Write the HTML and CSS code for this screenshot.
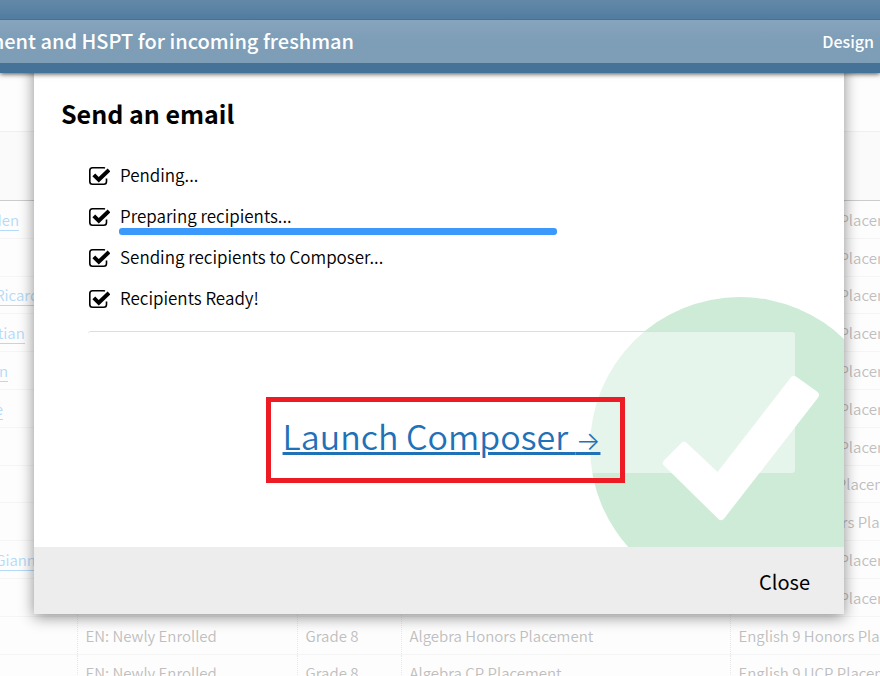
FILE: index.html
```html
<!DOCTYPE html>
<html lang="en">
<head>
  <meta charset="UTF-8" />
  <meta name="viewport" content="width=device-width, initial-scale=1.0"/>
  <title>Send an email</title>
  <link rel="stylesheet" href="styles.css">
</head>
<body>

  <header class="top">
    <div class="top-bar">
      <h1 class="top-title">Placement and HSPT for incoming freshman</h1>
      <a class="top-link" href="#">Design</a>
    </div>
  </header>

  <main class="page">
    <table class="students">
      <thead>
        <tr><th class="c-name"></th><th class="c-status"></th><th class="c-grade"></th><th class="c-math"></th><th></th></tr>
      </thead>
      <tbody>
        <tr><td><a href="#">Martinez, Aiden</a></td><td></td><td></td><td></td><td>English 9 Core Placement</td></tr>
        <tr><td></td><td></td><td></td><td></td><td>English 9 Core Placement</td></tr>
        <tr><td><a href="#">Hernandez, Ricardo</a></td><td></td><td></td><td></td><td>English 9 Core Placement</td></tr>
        <tr><td><a href="#">Morris, Christian</a></td><td></td><td></td><td></td><td>English 9 Core Placement</td></tr>
        <tr><td><a href="#">Nelson, Ethan</a></td><td></td><td></td><td></td><td>English 9 Core Placement</td></tr>
        <tr><td><a href="#">Parker, Chloe</a></td><td></td><td></td><td></td><td>English 9 Core Placement</td></tr>
        <tr><td></td><td></td><td></td><td></td><td>English 9 Core Placement</td></tr>
        <tr><td></td><td></td><td></td><td></td><td>English 9 UCP Placement</td></tr>
        <tr><td></td><td></td><td></td><td></td><td>English 9 Honors Placement</td></tr>
        <tr><td><a href="#">Hernandez, Gianna</a></td><td></td><td></td><td></td><td>English 9 Core Placement</td></tr>
        <tr><td></td><td></td><td></td><td></td><td>English 9 Core Placement</td></tr>
        <tr><td></td><td>EN: Newly Enrolled</td><td>Grade 8</td><td>Algebra Honors Placement</td><td>English 9 Honors Placement</td></tr>
        <tr><td></td><td>EN: Newly Enrolled</td><td>Grade 8</td><td>Algebra CP Placement</td><td>English 9 UCP Placement</td></tr>
      </tbody>
    </table>
  </main>

  <div class="modal" role="dialog" aria-labelledby="modal-title">
    <div class="modal-body">
      <svg class="done-badge" viewBox="0 0 300 300" aria-hidden="true">
        <circle cx="150" cy="150" r="150" fill="#cdebd6"/>
        <path d="M204 83 L225 98 L131 219 L77 166 L94 149 L128 181 Z" fill="#fff" stroke="#fff" stroke-width="8" stroke-linejoin="round"/>
      </svg>

      <h2 id="modal-title">Send an email</h2>

      <ul class="steps">
        <li><input type="checkbox" id="step1" checked><label for="step1">Pending...</label></li>
        <li>
          <input type="checkbox" id="step2" checked><label for="step2">Preparing recipients...</label>
          <progress max="100" value="100" aria-label="Preparing recipients"></progress>
        </li>
        <li><input type="checkbox" id="step3" checked><label for="step3">Sending recipients to Composer...</label></li>
        <li><input type="checkbox" id="step4" checked><label for="step4">Recipients Ready!</label></li>
      </ul>

      <div class="launch">
        <a href="#">Launch Composer <span class="arrow">→</span></a>
      </div>
    </div>
    <div class="modal-footer">
      <button type="button">Close</button>
    </div>
  </div>

</body>
</html>
```
FILE: styles.css
```css
* {
  box-sizing: border-box;
}

body {
  margin: 0;
  height: 100vh;
  overflow: hidden;
  font-family: "Noto Sans CJK JP", "Open Sans", sans-serif;
  font-size: 15px;
  background: #fdfdfd;
  color: #000;
}

/* header */
.top {
  position: relative;
  z-index: 3;
  padding: 19px 0 10px;
  background: linear-gradient(#6489a8, #517c9f 19px, #457297 19px);
  box-shadow: 0 1px 5px rgba(0, 0, 0, 0.7);
}

.top-bar {
  display: flex;
  justify-content: space-between;
  align-items: center;
  height: 44px;
  padding: 0 6px 2px 0;
  border-top: 1px solid #457297;
  background: linear-gradient(#88a4bd, #7e9db7 20px);
  color: #fff;
}

.top-title {
  display: flex;
  justify-content: flex-end;
  width: 354px;
  margin: 0;
  overflow: hidden;
  white-space: nowrap;
  font-size: 20px;
  font-weight: 500;
  line-height: 32px;
}

.top-link {
  color: #fff;
  font-size: 16px;
  font-weight: 500;
  text-decoration: none;
}

/* table behind the dialog */
.page {
  padding-top: 58px;
  overflow: hidden;
}

.students {
  width: calc(100% + 300px);
  margin-left: -96px;
  border-collapse: collapse;
  table-layout: fixed;
  color: #bfbfbf;
  font-weight: 350;
}

.students th {
  height: 69px;
  background: #fafafa;
  border-top: 1px solid #efefef;
  border-bottom: 1px solid #ccc;
}

.students td {
  height: 38px;
  padding: 0 8px;
  border-bottom: 1px solid #f5f5f5;
  border-right: 1px dotted #e8e8e8;
  line-height: 20px;
  white-space: nowrap;
}

.students tr:nth-child(5n-2) td {
  height: 37px;
}

.students a {
  color: #b5daf7;
  text-decoration: none;
  border-bottom: 1px solid #b5daf7;
}

.c-name { width: 173px; }
.c-status { width: 220px; }
.c-grade { width: 104px; }
.c-math { width: 329px; }

/* dialog */
.modal {
  position: absolute;
  top: 60px;
  left: 34px;
  right: 36px;
  z-index: 2;
  background: #fff;
  box-shadow: 0 3px 14px rgba(0, 0, 0, 0.45);
}

.modal-body {
  position: relative;
  padding: 36px 49px 74px 54px;
  overflow: hidden;
}

.done-badge {
  position: absolute;
  top: 237px;
  right: -46px;
  width: 300px;
  height: 300px;
}

.modal h2 {
  margin: 0 0 25px -27px;
  font-size: 25px;
  line-height: 34px;
}

.steps {
  margin: 0;
  padding: 0 0 12px;
  list-style: none;
}

.steps li {
  position: relative;
  display: flex;
  align-items: center;
  gap: 10px;
  height: 41px;
  font-size: 17px;
  font-weight: 350;
}

.steps label {
  padding-bottom: 2px;
}

.steps input {
  appearance: none;
  width: 22px;
  height: 20px;
  margin: 0;
  background: url("data:image/svg+xml,%3Csvg xmlns='http://www.w3.org/2000/svg' viewBox='0 0 22 20'%3E%3Cpath d='M18.5 12.5v3q0 2.7-2.7 2.7H4.5q-2.7 0-2.7-2.7V4.5q0-2.7 2.7-2.7h11q.8 0 1.5.3' fill='none' stroke='%23000' stroke-width='1.6'/%3E%3Cpath d='M5.8 8.8l5 5L21 4' fill='none' stroke='%23000' stroke-width='4'/%3E%3C/svg%3E") no-repeat;
}

.steps progress {
  appearance: none;
  position: absolute;
  left: 31px;
  bottom: 2px;
  width: 62%;
  height: 7px;
  border: none;
  border-radius: 3px;
  overflow: hidden;
}

.steps progress::-webkit-progress-bar {
  background: #eee;
}

.steps progress::-webkit-progress-value {
  background: #3b99fc;
}

.launch {
  position: relative;
  display: flex;
  justify-content: center;
  align-items: center;
  height: 142px;
  padding-top: 66px;
  border-top: 1px solid #ddd;
  border-radius: 3px;
  background: rgba(255, 255, 255, 0.5);
}

.launch a {
  position: relative;
  color: #1f71b8;
  font-size: 34px;
  font-weight: 350;
  line-height: 52px;
  text-decoration-thickness: 3px;
  text-underline-offset: 2px;
}

.arrow {
  font-family: Inter, sans-serif;
  font-size: 26px;
  line-height: 1;
}

/* red frame round the launch link */
.launch a::after {
  content: "";
  position: absolute;
  inset: -13px -25px -21px -17px;
  border: 5px solid #ed1c24;
}

.modal-footer {
  display: flex;
  justify-content: flex-end;
  align-items: center;
  height: 67px;
  padding: 2px 34px 0;
  background: #ededed;
}

.modal-footer button {
  padding: 0;
  border: none;
  background: none;
  color: #000;
  font: inherit;
  font-size: 20px;
  cursor: pointer;
}
```
